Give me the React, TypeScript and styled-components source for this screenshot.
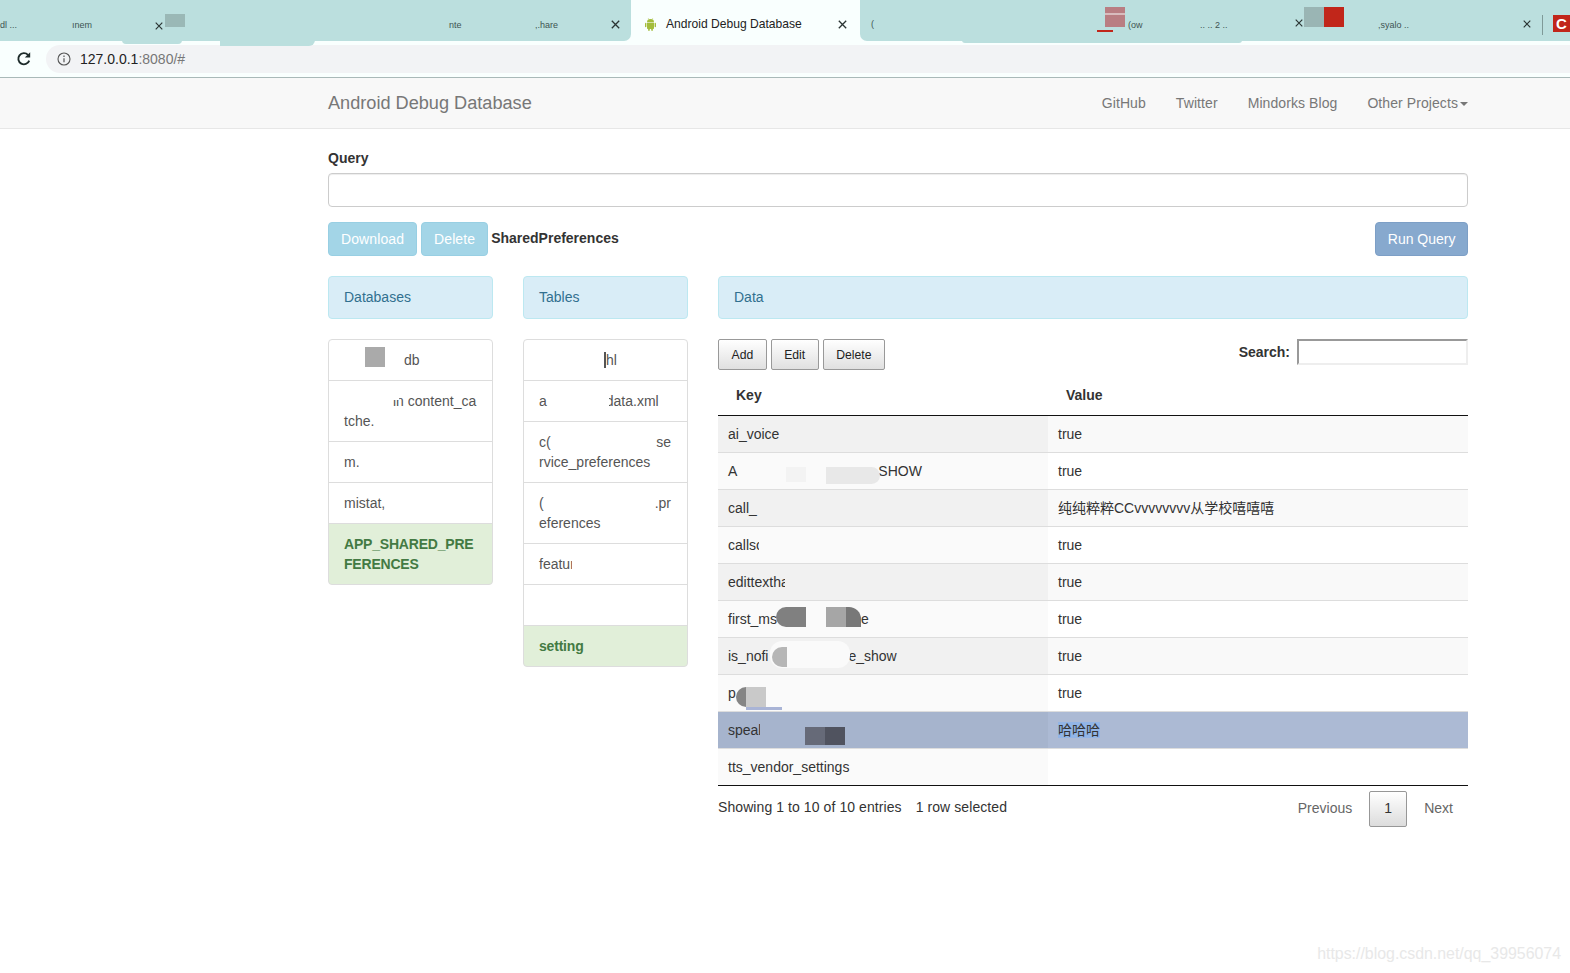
import React from "react";
import styled, { createGlobalStyle } from "styled-components";

const GlobalStyle = createGlobalStyle`
  html, body {
    margin: 0;
    padding: 0;
    background: #fff;
    font-family: "Liberation Sans", Arial, "Noto Sans CJK SC", sans-serif;
    font-size: 14px;
    line-height: 20px;
    color: #333;
    overflow: hidden;
  }
  * {
    box-sizing: border-box;
  }
`;

const Page = styled.div`
  position: relative;
  width: 1570px;
  height: 973px;
  overflow: hidden;
`;

/* browser chrome */
const Chrome = styled.div`
  position: relative;
  height: 78px;
  background: #f9fffe;
  border-bottom: 1px solid #a9b9b8;
`;

const TabStrip = styled.div`
  display: flex;
  height: 41px;
`;

const TabGroup = styled.div<{ $side: "left" | "right" }>`
  flex: ${(p) => (p.$side === "left" ? "0 0 631px" : "1")};
  background: #bbdfde;
  border-bottom-${(p) => (p.$side === "left" ? "right" : "left")}-radius: 7px;
`;

const ActiveTab = styled.div`
  flex: 0 0 229px;
  height: 34px;
  margin-top: 7px;
  padding: 0 13px 0 14px;
  display: flex;
  align-items: center;
  gap: 10px;
  background: #f9fffe;
  color: #222;
  font-size: 12.1px;
  border-radius: 8px 8px 0 0;
`;

const TabTitle = styled.span`
  flex: 1;
  white-space: nowrap;
`;

const Smudge = styled.div<{ $x: number; $y: number; $w: number; $h: number; $bg: string; $round?: string }>`
  position: absolute;
  left: ${(p) => p.$x}px;
  top: ${(p) => p.$y}px;
  width: ${(p) => p.$w}px;
  height: ${(p) => p.$h}px;
  background: ${(p) => p.$bg};
  border-radius: ${(p) => p.$round || "0"};
`;

const Scrap = styled.span<{ $x: number; $y?: number }>`
  position: absolute;
  left: ${(p) => p.$x}px;
  top: ${(p) => p.$y ?? 20}px;
  font-size: 9px;
  line-height: 10px;
  color: #3e5452;
  white-space: nowrap;
`;

const CloseMark = styled.span<{ $x: number; $y: number }>`
  position: absolute;
  left: ${(p) => p.$x}px;
  top: ${(p) => p.$y}px;
  display: flex;
`;

const AppBadge = styled.div`
  position: absolute;
  left: 1553px;
  top: 15px;
  width: 17px;
  height: 17px;
  padding-left: 3px;
  display: flex;
  align-items: center;
  font-size: 15px;
  font-weight: 700;
  color: #fff;
  background: #c1261a;
`;

const Divider = styled.div`
  position: absolute;
  left: 1542px;
  top: 15px;
  width: 1px;
  height: 20px;
  background: #7f9a98;
`;

const AddressRow = styled.div`
  height: 36px;
  display: flex;
  align-items: flex-start;
  padding: 4px 0 0 15px;
  gap: 13px;
`;

const ReloadButton = styled.div`
  width: 18px;
  height: 28px;
  display: flex;
  align-items: center;
  justify-content: center;
`;

const AddressBar = styled.div`
  flex: 1;
  height: 28px;
  padding-left: 11px;
  display: flex;
  align-items: center;
  gap: 9px;
  background: #f2f3f5;
  border-radius: 14px 0 0 14px;
  font-size: 14px;
  color: #777;
`;

const Host = styled.span`
  color: #222;
`;

/* navbar */
const Navbar = styled.nav`
  height: 51px;
  padding: 0 102px 0 328px;
  display: flex;
  align-items: center;
  justify-content: space-between;
  background: #f8f8f8;
  border-bottom: 1px solid #e7e7e7;
`;

const Brand = styled.a`
  font-size: 18.15px;
  color: #777;
`;

const NavLinks = styled.div`
  display: flex;
  gap: 30px;
`;

const NavLink = styled.a`
  display: flex;
  align-items: center;
  gap: 2px;
  color: #777;
  letter-spacing: 0.08px;
`;

const Caret = styled.span`
  width: 0;
  height: 0;
  margin-top: 2px;
  border-top: 4px solid #777;
  border-left: 4px solid transparent;
  border-right: 4px solid transparent;
`;

/* page body */
const Main = styled.main`
  padding: 19px 102px 0 328px;
`;

const QueryLabel = styled.label`
  display: block;
  margin-bottom: 5px;
  font-weight: 700;
`;

const QueryInput = styled.div`
  height: 34px;
  background: #fff;
  border: 1px solid #ccc;
  border-radius: 4px;
  box-shadow: inset 0 1px 1px rgba(0, 0, 0, 0.075);
`;

const ActionRow = styled.div`
  display: flex;
  align-items: center;
  gap: 4px;
  margin-top: 15px;
`;

const ActionButton = styled.button<{ $tone: "info" | "primary" }>`
  height: 34px;
  padding: 0 ${(p) => (p.$tone === "info" ? "12px" : "11.5px")};
  font: inherit;
  letter-spacing: ${(p) => (p.$tone === "info" ? "0.1px" : "0")};
  color: #fff;
  border-radius: 4px;
  background: ${(p) => (p.$tone === "info" ? "#a3d5e7" : "#87a9ce")};
  border: 1px solid ${(p) => (p.$tone === "info" ? "#98cfe3" : "#7d9fc6")};
`;

const DbType = styled.strong`
  flex: 1;
  margin-bottom: 2px;
  margin-left: -1px;
`;

const Columns = styled.div`
  display: grid;
  grid-template-columns: 165px 165px 1fr;
  column-gap: 30px;
  margin-top: 20px;
`;

const Heading = styled.div`
  height: 43px;
  margin-bottom: 20px;
  padding: 0 15px 2px;
  display: flex;
  align-items: center;
  color: #31708f;
  background: #d9edf7;
  border: 1px solid #bce8f1;
  border-radius: 4px;
`;

const ListGroup = styled.div`
  display: flex;
  flex-direction: column;
`;

const ListItem = styled.div<{ $active?: boolean }>`
  position: relative;
  min-height: 42px;
  margin-bottom: -1px;
  padding: 10px 15px;
  color: ${(p) => (p.$active ? "#437a43" : "#555")};
  font-weight: ${(p) => (p.$active ? 700 : 400)};
  letter-spacing: ${(p) => (p.$active ? "-0.2px" : "0")};
  background: ${(p) => (p.$active ? "#e1efd9" : "#fff")};
  border: 1px solid #ddd;

  &:first-child {
    border-radius: 4px 4px 0 0;
  }
  &:last-child {
    border-radius: 0 0 4px 4px;
  }
`;

const Line = styled.div<{ $indent?: number; $split?: boolean }>`
  display: flex;
  justify-content: ${(p) => (p.$split ? "space-between" : "flex-start")};
  padding-left: ${(p) => p.$indent ?? 0}px;
  padding-right: ${(p) => (p.$split ? 1 : 0)}px;
  white-space: nowrap;
`;

const Patch = styled.div<{ $x: number; $y: number; $w: number; $h: number; $bg: string; $round?: string }>`
  position: absolute;
  left: ${(p) => p.$x}px;
  top: ${(p) => p.$y}px;
  width: ${(p) => p.$w}px;
  height: ${(p) => p.$h}px;
  background: ${(p) => p.$bg};
  border-radius: ${(p) => p.$round || "0"};
`;

/* data table */
const Toolbar = styled.div`
  height: 36px;
  display: flex;
  align-items: flex-start;
  justify-content: space-between;
`;

const ToolButtons = styled.div`
  display: flex;
  gap: 4px;
`;

const ToolButton = styled.button`
  height: 31px;
  padding: 0 12.5px;
  font: inherit;
  font-size: 12.2px;
  color: #222;
  border: 1px solid #999;
  border-radius: 2px;
  background: linear-gradient(to bottom, #fff 0%, #e0e0e0 100%);
`;

const SearchLabel = styled.label`
  display: flex;
  align-items: center;
  gap: 7px;
  font-weight: 700;
`;

const SearchBox = styled.div`
  width: 171px;
  height: 26px;
  background: #fff;
  border: 2px solid #eee;
  border-top-color: #999;
  border-left-color: #999;
`;

const Table = styled.table`
  width: 100%;
  border-collapse: collapse;
  table-layout: fixed;
  border-bottom: 1px solid #111;
`;

const KeyHead = styled.th`
  width: 330px;
  height: 40px;
  padding: 0 18px;
  text-align: left;
  border-bottom: 1px solid #111;
`;

const ValueHead = styled(KeyHead)`
  width: auto;
`;

const Row = styled.tr<{ $odd: boolean; $selected?: boolean }>`
  background: ${(p) => (p.$selected ? "#acbad4" : p.$odd ? "#f9f9f9" : "#fff")};
`;

const KeyCell = styled.td<{ $odd: boolean; $selected?: boolean }>`
  position: relative;
  width: 330px;
  height: 37px;
  padding: 0 10px;
  border-top: 1px solid #ddd;
  white-space: nowrap;
  background: ${(p) => (p.$selected ? "#a6b4cd" : p.$odd ? "#f1f1f1" : "#fafafa")};
`;

const ValueCell = styled.td`
  height: 37px;
  padding: 0 10px;
  border-top: 1px solid #ddd;
`;

const Tail = styled.span<{ $gap: number }>`
  margin-left: ${(p) => p.$gap}px;
`;

const Highlight = styled.span`
  background: #92b5e6;
`;

const Footer = styled.div`
  display: flex;
  justify-content: space-between;
  align-items: flex-start;
`;

const Info = styled.div`
  padding-top: 11px;
  display: flex;
  gap: 14px;
  letter-spacing: 0.08px;
`;

const Pager = styled.div`
  display: flex;
  align-items: center;
  margin-top: 5px;
  padding-right: 15px;
  color: #666;
`;

const PagerLabel = styled.span`
  margin-bottom: 2px;
`;

const PageNumber = styled.span`
  width: 38px;
  height: 36px;
  margin: 0 17px;
  padding-bottom: 2px;
  display: flex;
  align-items: center;
  justify-content: center;
  color: #333;
  border: 1px solid #979797;
  border-radius: 2px;
  background: linear-gradient(to bottom, #fff 0%, #dcdcdc 100%);
`;

const Watermark = styled.div`
  position: absolute;
  right: 9px;
  top: 944px;
  font-size: 15.9px;
  color: #e8e8e8;
`;

type DataRow = {
  key: React.ReactNode;
  value: React.ReactNode;
  selected?: boolean;
};

const rows: DataRow[] = [
  { key: "ai_voice", value: "true" },
  {
    key: (
      <>
        A
        <Tail $gap={141}>SHOW</Tail>
        <Patch $x={68} $y={14} $w={20} $h={15} $bg="#f3f3f3" />
        <Patch $x={108} $y={14} $w={54} $h={17} $bg="#e8e8e8" $round="0 10px 10px 0" />
      </>
    ),
    value: "true",
  },
  { key: "call_", value: "纯纯粹粹CCvvvvvvvv从学校嘻嘻嘻" },
  {
    key: (
      <>
        callsc
        <Patch $x={41} $y={8} $w={10} $h={22} $bg="#fafafa" />
      </>
    ),
    value: "true",
  },
  {
    key: (
      <>
        edittextha
        <Patch $x={67} $y={8} $w={10} $h={22} $bg="#f1f1f1" />
      </>
    ),
    value: "true",
  },
  {
    key: (
      <>
        first_ms
        <Tail $gap={84}>e</Tail>
        <Patch $x={58} $y={6} $w={30} $h={20} $bg="#808080" $round="10px 0 0 10px" />
        <Patch $x={108} $y={6} $w={20} $h={20} $bg="#a6a6a6" />
        <Patch $x={128} $y={6} $w={15} $h={20} $bg="#787878" $round="0 12px 0 0" />
      </>
    ),
    value: "true",
  },
  {
    key: (
      <>
        is_nofi
        <Tail $gap={80}>e_show</Tail>
        <Patch $x={52} $y={3} $w={80} $h={27} $bg="#fafafa" $round="12px" />
        <Patch $x={54} $y={9} $w={15} $h={20} $bg="#b6b6b6" $round="10px 0 0 10px" />
      </>
    ),
    value: "true",
  },
  {
    key: (
      <>
        p
        <Patch $x={18} $y={12} $w={10} $h={20} $bg="#858585" $round="10px 0 0 10px" />
        <Patch $x={28} $y={12} $w={20} $h={20} $bg="#c9c9c9" />
        <Patch $x={28} $y={32} $w={36} $h={3} $bg="#a9b4d6" />
      </>
    ),
    value: "true",
  },
  {
    key: (
      <>
        speak
        <Patch $x={42} $y={8} $w={12} $h={22} $bg="#a6b4cd" />
        <Patch $x={87} $y={15} $w={20} $h={18} $bg="#666a78" />
        <Patch $x={107} $y={15} $w={20} $h={18} $bg="#50535f" />
      </>
    ),
    value: <Highlight>哈哈哈</Highlight>,
    selected: true,
  },
  { key: "tts_vendor_settings", value: "" },
];

const ReloadIcon = () => (
  <svg width="16" height="16" viewBox="0 0 16 16" fill="none">
    <path d="M13.2 9.6A5.6 5.6 0 1 1 12 3.9" stroke="#1d2b2a" strokeWidth="1.9" />
    <path d="M14.2 1.2v5.4H8.8z" fill="#1d2b2a" />
  </svg>
);

const InfoIcon = () => (
  <svg width="14" height="14" viewBox="0 0 14 14" fill="none">
    <circle cx="7" cy="7" r="6" stroke="#555" strokeWidth="1.1" />
    <path d="M7 6.2v4M7 3.6v1.3" stroke="#555" strokeWidth="1.2" />
  </svg>
);

const CloseIcon = ({ size = 9 }: { size?: number }) => (
  <svg width={size} height={size} viewBox="0 0 9 9" fill="none">
    <path d="M.8.8l7.4 7.4M8.2.8L.8 8.2" stroke="#2a3433" strokeWidth="1.3" />
  </svg>
);

const AndroidIcon = () => (
  <svg width="11" height="13" viewBox="0 0 11 13" fill="#a4bd3c">
    <path d="M2 4.2a3.5 3.3 0 0 1 7 0z" />
    <path d="M2 4.8h7v5.4a.8.8 0 0 1-.8.8H2.800a.8.8 0 0 1-.8-.8z" />
    <rect x="0" y="4.800" width="1.400" height="4.400" rx=".7" />
    <rect x="9.600" y="4.800" width="1.400" height="4.400" rx=".7" />
    <rect x="3.200" y="10.500" width="1.500" height="2.500" rx=".7" />
    <rect x="6.300" y="10.500" width="1.500" height="2.500" rx=".7" />
    <path d="M3.200.2l.9 1.400M7.800.2l-.9 1.400" stroke="#a4bd3c" strokeWidth=".5" />
  </svg>
);

export default function App() {
  return (
    <Page>
      <GlobalStyle />
      <Chrome>
        <TabStrip>
          <TabGroup $side="left" />
          <ActiveTab>
            <AndroidIcon />
            <TabTitle>Android Debug Database</TabTitle>
            <CloseIcon />
          </ActiveTab>
          <TabGroup $side="right" />
        </TabStrip>
        <AddressRow>
          <ReloadButton>
            <ReloadIcon />
          </ReloadButton>
          <AddressBar>
            <InfoIcon />
            <span>
              <Host>127.0.0.1</Host>:8080/#
            </span>
          </AddressBar>
        </AddressRow>

        <Smudge $x={122} $y={40} $w={60} $h={4} $bg="#bbdfde" $round="0 0 10px 10px" />
        <Smudge $x={220} $y={40} $w={95} $h={6} $bg="#bbdfde" $round="0 0 30px 0" />
        <Smudge $x={962} $y={40} $w={280} $h={3} $bg="#bbdfde" $round="0 0 30px 30px" />
        <Smudge $x={165} $y={14} $w={20} $h={13} $bg="#9ab8b6" />
        <Smudge $x={1105} $y={7} $w={20} $h={20} $bg="#b97e82" />
        <Smudge $x={1105} $y={13} $w={20} $h={2} $bg="#d8bcbd" />
        <Smudge $x={1097} $y={30} $w={16} $h={2} $bg="#c1261a" />
        <Smudge $x={1304} $y={7} $w={20} $h={20} $bg="#9ab5b4" />
        <Smudge $x={1324} $y={7} $w={20} $h={20} $bg="#c1261a" />
        <AppBadge>C</AppBadge>
        <Divider />
        <Scrap $x={0}>dl ...</Scrap>
        <Scrap $x={72}>ınem</Scrap>
        <Scrap $x={449}>nte</Scrap>
        <Scrap $x={535}>,.hare</Scrap>
        <Scrap $x={871} $y={19}>(</Scrap>
        <Scrap $x={1128}>(ow</Scrap>
        <Scrap $x={1200}>.. .. 2 ..</Scrap>
        <Scrap $x={1378}>,syalo ..</Scrap>
        <CloseMark $x={155} $y={22}>
          <CloseIcon size={8} />
        </CloseMark>
        <CloseMark $x={611} $y={20}>
          <CloseIcon />
        </CloseMark>
        <CloseMark $x={1295} $y={19}>
          <CloseIcon size={8} />
        </CloseMark>
        <CloseMark $x={1523} $y={20}>
          <CloseIcon size={8} />
        </CloseMark>
      </Chrome>

      <Navbar>
        <Brand>Android Debug Database</Brand>
        <NavLinks>
          <NavLink>GitHub</NavLink>
          <NavLink>Twitter</NavLink>
          <NavLink>Mindorks Blog</NavLink>
          <NavLink>
            Other Projects
            <Caret />
          </NavLink>
        </NavLinks>
      </Navbar>

      <Main>
        <QueryLabel>Query</QueryLabel>
        <QueryInput />
        <ActionRow>
          <ActionButton $tone="info">Download</ActionButton>
          <ActionButton $tone="info">Delete</ActionButton>
          <DbType>SharedPreferences</DbType>
          <ActionButton $tone="primary">Run Query</ActionButton>
        </ActionRow>

        <Columns>
          <div>
            <Heading>Databases</Heading>
            <ListGroup>
              <ListItem>
                <Line $indent={60}>db</Line>
                <Patch $x={36} $y={7} $w={20} $h={20} $bg="#aaaaaa" />
                <Patch $x={66} $y={10} $w={9} $h={20} $bg="#fff" />
                <Patch $x={50} $y={40} $w={18} $h={6} $bg="#fff" />
              </ListItem>
              <ListItem>
                <Line $indent={49}>in content_ca</Line>
                <Line>tche.</Line>
                <Patch $x={40} $y={14} $w={30} $h={5} $bg="#fff" />
              </ListItem>
              <ListItem>m.</ListItem>
              <ListItem>mistat,</ListItem>
              <ListItem $active>
                <Line>APP_SHARED_PRE</Line>
                <Line>FERENCES</Line>
              </ListItem>
            </ListGroup>
          </div>

          <div>
            <Heading>Tables</Heading>
            <ListGroup>
              <ListItem>
                <Line $indent={67}>hl</Line>
                <Patch $x={80} $y={12} $w={2} $h={16} $bg="#555" />
              </ListItem>
              <ListItem>
                <Line>
                  a<Tail $gap={59}>data.xml</Tail>
                </Line>
                <Patch $x={74} $y={10} $w={11} $h={20} $bg="#fff" />
              </ListItem>
              <ListItem>
                <Line $split>
                  <span>c(</span>
                  <span>se</span>
                </Line>
                <Line>rvice_preferences</Line>
              </ListItem>
              <ListItem>
                <Line $split>
                  <span>(</span>
                  <span>.pr</span>
                </Line>
                <Line>eferences</Line>
              </ListItem>
              <ListItem>
                featur
                <Patch $x={48} $y={10} $w={12} $h={20} $bg="#fff" />
              </ListItem>
              <ListItem />
              <ListItem $active>setting</ListItem>
            </ListGroup>
          </div>

          <div>
            <Heading>Data</Heading>
            <Toolbar>
              <ToolButtons>
                <ToolButton>Add</ToolButton>
                <ToolButton>Edit</ToolButton>
                <ToolButton>Delete</ToolButton>
              </ToolButtons>
              <SearchLabel>
                Search:
                <SearchBox />
              </SearchLabel>
            </Toolbar>
            <Table>
              <thead>
                <tr>
                  <KeyHead>Key</KeyHead>
                  <ValueHead>Value</ValueHead>
                </tr>
              </thead>
              <tbody>
                {rows.map((row, i) => (
                  <Row key={i} $odd={i % 2 === 0} $selected={row.selected}>
                    <KeyCell $odd={i % 2 === 0} $selected={row.selected}>
                      {row.key}
                    </KeyCell>
                    <ValueCell>{row.value}</ValueCell>
                  </Row>
                ))}
              </tbody>
            </Table>
            <Footer>
              <Info>
                <span>Showing 1 to 10 of 10 entries</span>
                <span>1 row selected</span>
              </Info>
              <Pager>
                <PagerLabel>Previous</PagerLabel>
                <PageNumber>1</PageNumber>
                <PagerLabel>Next</PagerLabel>
              </Pager>
            </Footer>
          </div>
        </Columns>
      </Main>

      <Watermark>https://blog.csdn.net/qq_39956074</Watermark>
    </Page>
  );
}
